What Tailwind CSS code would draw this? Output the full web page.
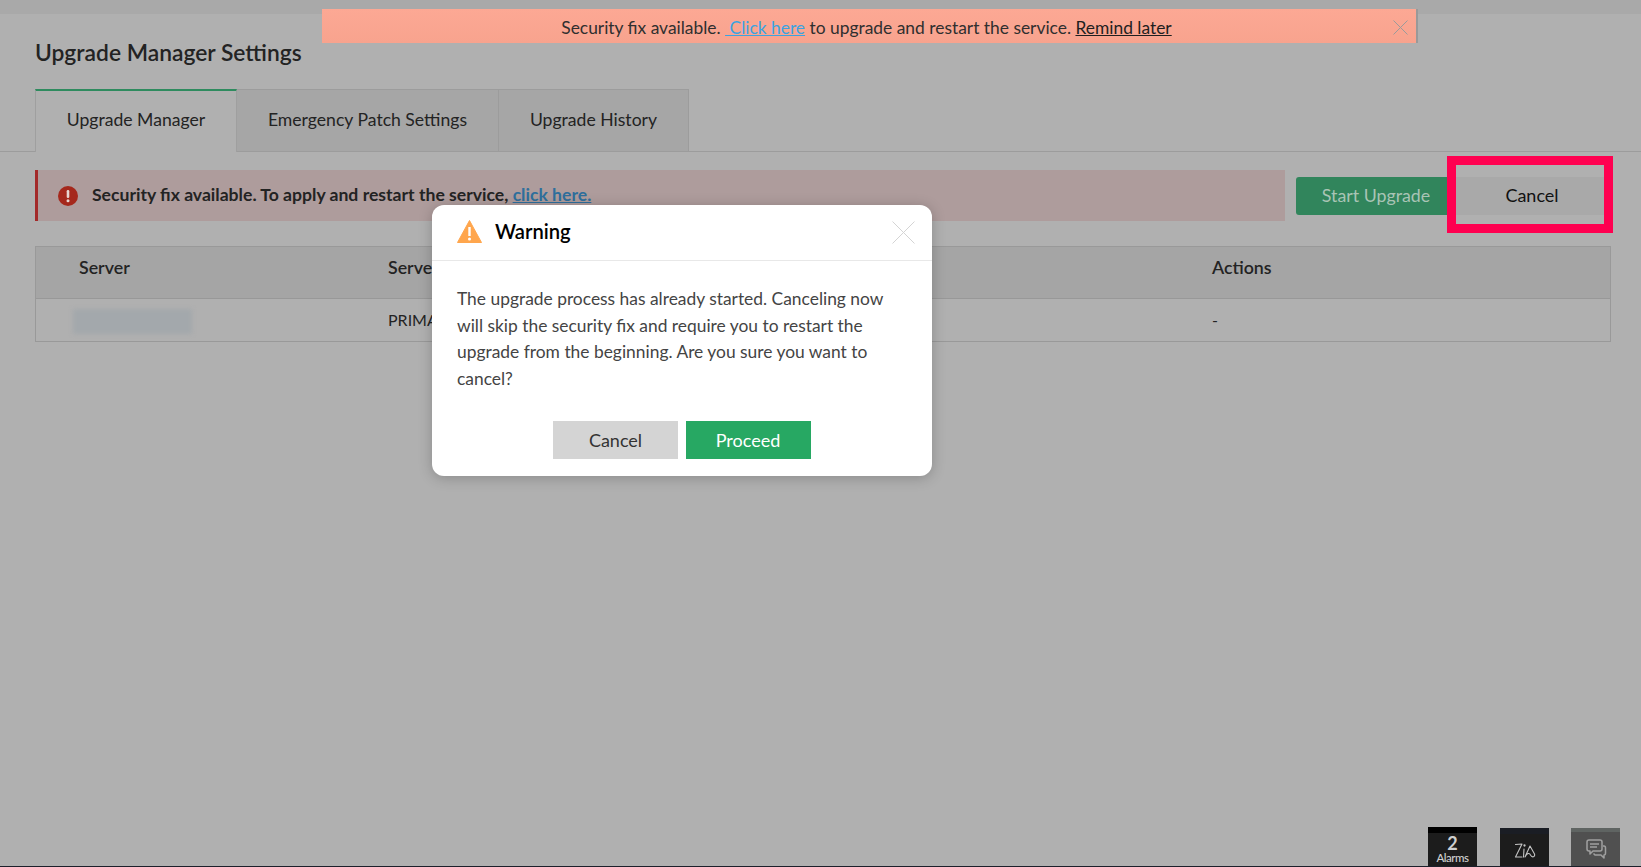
<!DOCTYPE html>
<html lang="en">
<head>
  <meta charset="UTF-8"/>
  <title>Upgrade Manager Settings</title>
  <script src="https://cdn.jsdelivr.net/npm/@tailwindcss/browser@4"></script>
</head>
<body class="relative h-[867px] w-[1641px] overflow-hidden bg-[#b0b0b0] font-['Lato',sans-serif] text-[#232323]">

  <!-- top strip -->
  <div class="h-[14px] bg-[#a9a9a9]"></div>

  <!-- upgrade banner -->
  <div class="absolute left-[322px] top-[9px] flex h-[34px] w-[1096px] items-center justify-center border-r-2 border-[#999] bg-gradient-to-b from-[#fca894] to-[#f8a38e] pr-[5px] pt-[4px] text-[17.4px] text-[#2f2f2f]">
    <span>Security fix available.&nbsp;<a class="text-[#3ba3e0] underline">&nbsp;Click here</a> to upgrade and restart the service. <a class="text-[#1f1f1f] underline">Remind later</a></span>
    <svg class="absolute right-[8px] top-[11px] size-[15px]" viewBox="0 0 15 15" fill="none" stroke="#9b9b9b" stroke-width="1"><path d="M0.5 0.5 14.5 14.5M14.5 0.5 0.5 14.5"/></svg>
  </div>

  <h1 class="ml-[35px] mt-[23px] text-[22.8px] font-semibold leading-[30px]">Upgrade Manager Settings</h1>

  <!-- tabs -->
  <div class="mt-[22px] flex h-[63px] border-b border-[#9c9c9c] pl-[35px] text-[17.6px]">
    <div class="flex h-[63px] w-[202px] items-center justify-center border-x border-t-2 border-x-[#9f9f9f] border-t-[#2e8b5e] bg-[#b0b0b0] pb-[3px]">Upgrade Manager</div>
    <div class="flex h-[62px] w-[262px] items-center justify-center border-r border-t border-[#9c9c9c] bg-[#a6a6a6] pb-[1px]">Emergency Patch Settings</div>
    <div class="flex h-[62px] w-[190px] items-center justify-center border-r border-t border-[#9c9c9c] bg-[#a6a6a6] pb-[1px]">Upgrade History</div>
  </div>

  <!-- alert row -->
  <div class="ml-[35px] mt-[18px] flex h-[51px] w-[1570px] items-center">
    <div class="flex h-[51px] w-[1250px] items-center border-l-[3px] border-[#a32a2a] bg-[#ae9c9c] pl-[20px] text-[17.6px] font-bold">
      <svg class="mr-[14px] size-[20px]" viewBox="0 0 20 20"><circle cx="10" cy="10" r="10" fill="#a5281c"/><rect x="8.7" y="4" width="2.6" height="8" rx="1.2" fill="#e8d5d0"/><circle cx="10" cy="14.8" r="1.5" fill="#e8d5d0"/></svg>
      <span>Security fix available. To apply and restart the service, <a class="text-[#2f6f9c] underline">click here.</a></span>
    </div>
    <button class="ml-[11px] h-[38px] w-[160px] rounded-l-[3px] bg-[#31855c] text-[17.8px] text-[#a9c4b5]">Start Upgrade</button>
    <!-- highlight annotation around the cancel button -->
    <div class="relative z-0 h-[38px] w-[148px] bg-[#a9a9a9] pl-[4px] text-center text-[18px] leading-[36px] text-[#111]">
      Cancel
      <div class="absolute -inset-x-[9px] -bottom-[18px] -top-[21px] border-[9px] border-[#ff0050]"></div>
    </div>
  </div>

  <!-- table -->
  <div class="ml-[35px] mt-[25px] h-[96px] w-[1576px] border border-[#999]">
    <div class="grid h-[52px] grid-cols-[352px_824px_1fr] items-center border-b border-[#989898] bg-[#a5a5a5] pb-[11px] text-[17.8px] font-semibold">
      <div class="pl-[43px]">Server</div>
      <div>Server</div>
      <div>Actions</div>
    </div>
    <div class="grid h-[42px] grid-cols-[352px_824px_1fr] items-center text-[16px]">
      <div class="pl-[37px] pt-[2px]"><div class="h-[25px] w-[119px] bg-[#a3a8ac] blur-[2px]"></div></div>
      <div>PRIMARY</div>
      <div>-</div>
    </div>
  </div>

  <!-- warning dialog -->
  <div class="absolute left-[432px] top-[205px] h-[271px] w-[500px] rounded-[12px] bg-white shadow-[0_2px_14px_rgba(0,0,0,0.22)]">
    <div class="relative flex h-[56px] items-center border-b border-[#e8e8e8] pb-[2px] pl-[25px]">
      <svg class="mr-[13px] size-[25px]" viewBox="0 0 25 25"><path d="M12.5 1.5 24.5 23.5H0.5Z" fill="#ffa64d" stroke="#ffa64d" stroke-width="1" stroke-linejoin="round"/><rect x="11.3" y="8" width="2.4" height="9" fill="#fff"/><circle cx="12.5" cy="20" r="1.5" fill="#fff"/></svg>
      <span class="text-[20.2px] font-semibold text-black">Warning</span>
      <svg class="absolute right-[17px] top-[16px] size-[23px]" viewBox="0 0 23 23" fill="none" stroke="#d4d4d4" stroke-width="1"><path d="M0.5 0.5 22.5 22.5M22.5 0.5 0.5 22.5"/></svg>
    </div>
    <p class="pl-[25px] pr-[40px] pt-[25px] text-[17.4px] leading-[26.5px] text-[#444]">The upgrade process has already started. Canceling now will skip the security fix and require you to restart the upgrade from the beginning. Are you sure you want to cancel?</p>
    <div class="mt-[29px] flex justify-center gap-[8px] pr-[1px] text-[18px]">
      <button class="h-[38px] w-[125px] bg-[#d4d4d4] pl-[1px] text-[#333]">Cancel</button>
      <button class="h-[38px] w-[125px] bg-[#27a863] text-white">Proceed</button>
    </div>
  </div>

  <!-- bottom dock -->
  <div class="absolute bottom-0 left-0 right-0 flex h-[40px] items-end justify-end border-b border-[#1b1f2a] pr-[21px]">
    <div class="mr-[23px] h-[39px] w-[49px] border-t-[6px] border-black bg-[#1c1c1c] pt-[2px] text-center text-[#cfcfcf]">
      <div class="text-[18px] font-bold leading-[17px]">2</div>
      <div class="text-[11.5px] font-medium leading-[11px] tracking-[-0.5px]">Alarms</div>
    </div>
    <div class="mr-[22px] flex h-[38px] w-[49px] items-center justify-center border-t-[6px] border-[#1a1d24] bg-[#1c1c1c]">
      <svg class="h-[18px] w-[24px]" viewBox="0 0 24 18" fill="none" stroke="#c4c4c4" stroke-width="1.1" stroke-linejoin="round" stroke-linecap="round"><path d="M2.5 3.5 9 3 2.5 16H9"/><path d="M11 8 10.5 16"/><circle cx="11.5" cy="4.5" r="0.6"/><path d="M12 16 17 5 21.5 13C22.5 16 19 17 17.5 14 16.5 11.5 14 12 12 16Z"/></svg>
    </div>
    <div class="flex h-[38px] w-[49px] items-center justify-center border-t-[4px] border-[#5f6462] bg-[#505050]">
      <svg class="size-[22px]" viewBox="0 0 22 22" fill="none" stroke="#a0a0a0" stroke-width="1.5" stroke-linejoin="round"><path d="M4 2H15Q17 2 17 4V11Q17 13 15 13H8L5 16V13H4Q2 13 2 11V4Q2 2 4 2Z"/><path d="M5 6H14M5 9H12"/><path d="M18 8H19Q20.5 8 20.5 10V15Q20.5 17 19 17V20L16 17H10L8.5 15.5"/></svg>
    </div>
  </div>

</body>
</html>
